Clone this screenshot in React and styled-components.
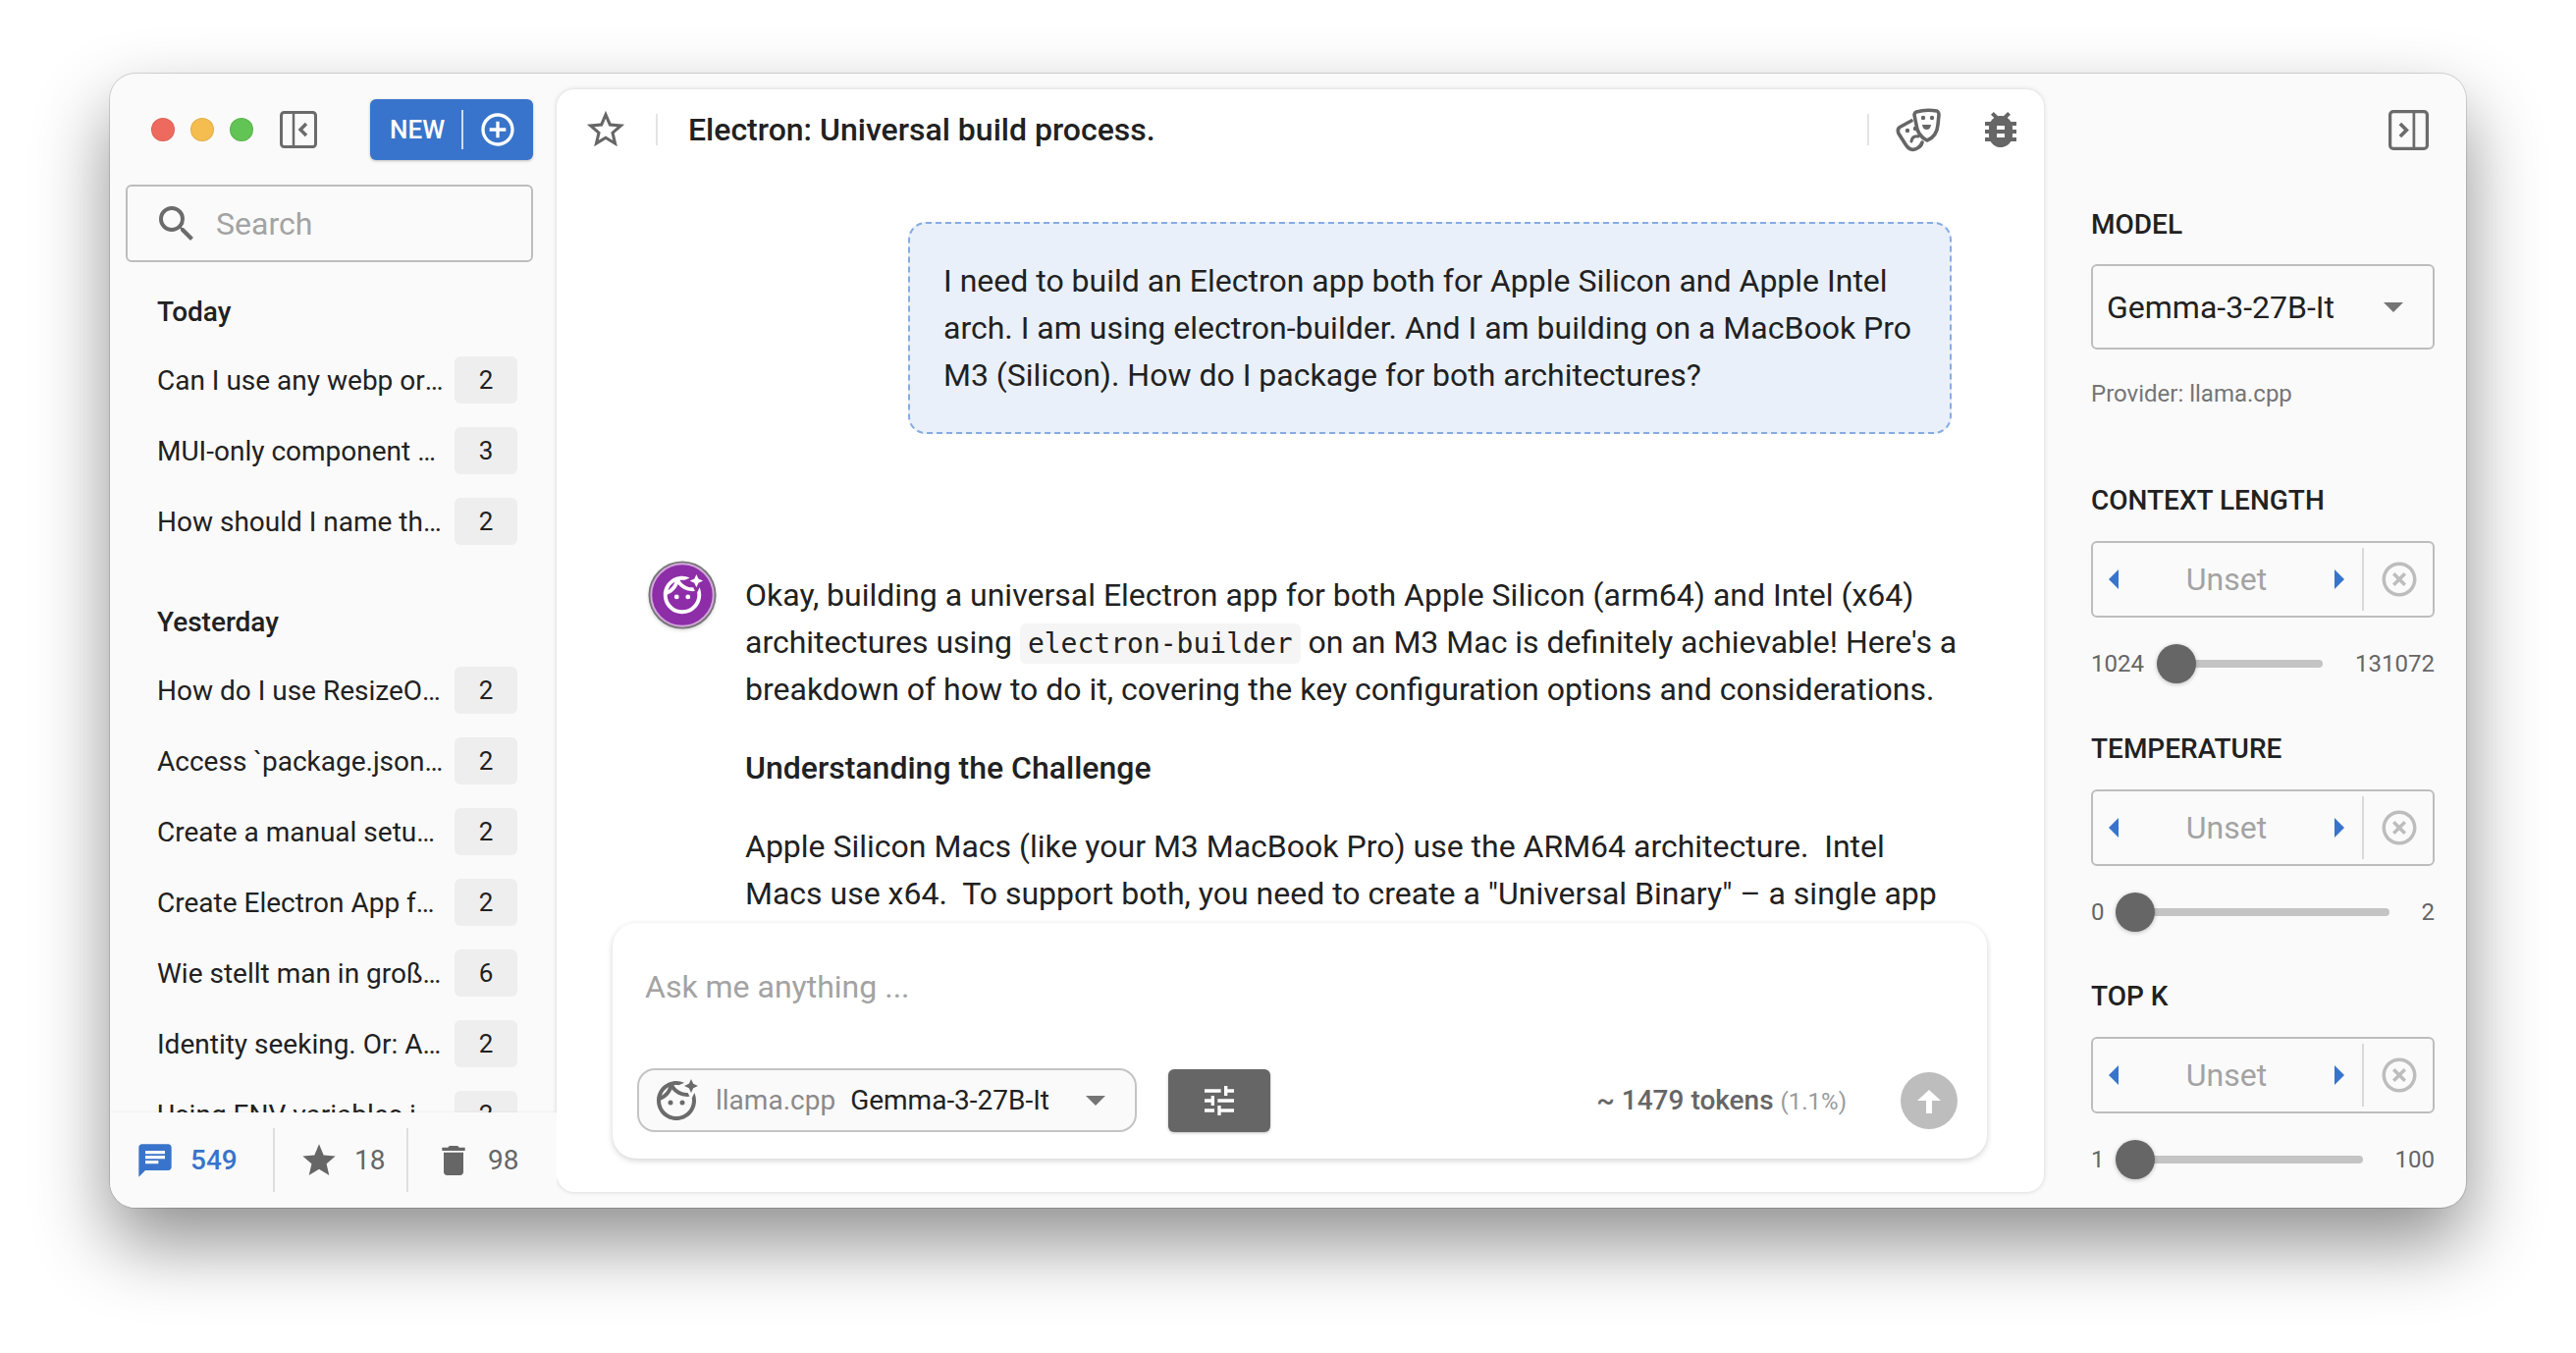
import React from 'react';
import styled, { createGlobalStyle } from 'styled-components';
import {
  MdSearch, MdStarBorder, MdStar, MdChat, MdDelete, MdAddCircleOutline, MdBugReport,
  MdTune, MdHighlightOff, MdOutlineFaceRetouchingNatural,
} from 'react-icons/md';

const GlobalStyle = createGlobalStyle`
  html, body { margin: 0; padding: 0; background: #fff; }
  * { box-sizing: border-box; }
  body { font-family: Roboto, "Liberation Sans", sans-serif; color: #212121; }
`;

const Page = styled.div`
  width: 2624px;
  height: 1378px;
  padding: 75px 112px 148px;
  overflow: hidden;
`;

const Window = styled.div`
  width: 2400px;
  height: 1155px;
  display: grid;
  grid-template-columns: 455px 1515px 430px;
  background: #fafafa;
  border-radius: 26px;
  overflow: hidden;
  box-shadow: 0 0 0 1px rgba(0, 0, 0, 0.14), 0 36px 76px rgba(0, 0, 0, 0.44);
`;

/* ---- left column ---- */

const Sidebar = styled.aside`
  display: flex;
  flex-direction: column;
  min-height: 0;
  overflow: hidden;
`;

const SideTop = styled.div`
  padding: 26px 24px 0 16px;
`;

const Toolbar = styled.div`
  display: flex;
  align-items: center;
  height: 62px;
`;

const Light = styled.span`
  width: 24px;
  height: 24px;
  border-radius: 50%;
  margin-right: 16px;
  background: ${(p) => p.$color};
  box-shadow: inset 0 0 0 1px rgba(0, 0, 0, 0.08);
  &:first-child { margin-left: 26px; }
`;

const PanelToggle = styled.svg`
  display: block;
  width: ${(p) => p.$size}px;
  height: ${(p) => p.$size}px;
  margin-left: ${(p) => p.$ml || 0}px;
`;

const NewButton = styled.button`
  margin-left: auto;
  width: 166px;
  height: 62px;
  border: 0;
  border-radius: 6px;
  background: #3874cb;
  color: #fff;
  display: flex;
  align-items: center;
  padding: 0 0 0 20px;
  font: 500 26px Roboto, sans-serif;
  box-shadow: 0 1px 3px rgba(0, 0, 0, 0.25);
`;

const NewDivider = styled.span`
  width: 2px;
  height: 40px;
  margin: 0 15px 0 17px;
  background: rgba(255, 255, 255, 0.75);
`;

const SearchBox = styled.div`
  margin-top: 25px;
  height: 79px;
  border: 2px solid #bdbdbd;
  border-radius: 6px;
  display: flex;
  align-items: center;
  padding-left: 26px;
  gap: 16px;
  color: #a3a3a3;
  font-size: 32px;
  svg { color: #6b6b6b; }
`;

const ChatList = styled.div`
  flex: 1;
  min-height: 0;
  overflow: hidden;
  padding: 16px 24px 0 16px;
`;

const GroupTitle = styled.div`
  height: 68px;
  line-height: 68px;
  padding: 1px 0 0 32px;
  font-size: 28px;
  font-weight: 500;
  &:not(:first-child) { margin-top: 32px; }
`;

const ChatRow = styled.div`
  height: 72px;
  display: flex;
  align-items: center;
  gap: 8px;
  padding: 0 16px 0 32px;
  font-size: 28px;
`;

const ChatTitle = styled.span`
  flex: 1;
  min-width: 0;
  white-space: nowrap;
  overflow: hidden;
  text-overflow: ellipsis;
`;

const CountBadge = styled.span`
  flex: none;
  width: 64px;
  height: 48px;
  line-height: 48px;
  text-align: center;
  border-radius: 6px;
  background: #eeeeee;
  font-size: 26px;
`;

const SideFooter = styled.div`
  flex: none;
  height: 97px;
  padding: 16px 0;
  display: flex;
  background: #fafafa;
  box-shadow: 0 -1px 2px rgba(0, 0, 0, 0.04);
  position: relative;
`;

const FooterItem = styled.div`
  display: flex;
  align-items: center;
  gap: ${(p) => p.$gap}px;
  width: ${(p) => p.$w}px;
  padding-left: ${(p) => p.$pl}px;
  color: ${(p) => (p.$active ? '#3874cb' : '#666')};
  font-size: 28px;
  font-weight: ${(p) => (p.$active ? 500 : 400)};
  & + & { border-left: 2px solid #dedede; }
`;

/* ---- middle column ---- */

const Main = styled.main`
  margin: 16px 0;
  min-height: 0;
  display: flex;
  flex-direction: column;
  background: #fff;
  border-radius: 18px;
  box-shadow: 0 0 5px rgba(0, 0, 0, 0.16);
  overflow: hidden;
`;

const MainHeader = styled.header`
  flex: none;
  height: 82px;
  display: flex;
  align-items: center;
  padding: 0 20px 0 27px;
  color: #666;
`;

const HeaderRule = styled.span`
  width: 2px;
  height: 32px;
  background: #e4e4e4;
  margin: ${(p) => p.$margin};
`;

const ChatHeading = styled.h1`
  margin: 0;
  flex: 1;
  font-size: 32px;
  font-weight: 500;
  color: #212121;
`;

const MasksIcon = styled.svg`
  display: block;
  width: 46px;
  height: 47px;
`;

const BugIcon = styled(MdBugReport)`
  margin-left: 37px;
`;

const Messages = styled.div`
  flex: 1;
  min-height: 0;
  overflow: hidden;
  padding-top: 53px;
`;

const UserBubble = styled.div`
  margin: 0 94px 0 358px;
  padding: 34px 34px;
  background: #e9f0f9;
  border: 2px dashed #86abe2;
  border-radius: 18px;
  font-size: 32px;
  line-height: 48px;
`;

const AssistantRow = styled.div`
  margin: 130px 0 0 93px;
  display: flex;
  gap: 31px;
`;

const Avatar = styled.div`
  flex: none;
  width: 68px;
  height: 68px;
  border-radius: 50%;
  background: #8e2da8;
  color: #fff;
  display: flex;
  align-items: center;
  justify-content: center;
  border: 2px solid #d3a8dc;
  box-shadow: 0 0 0 2px #777, 0 2px 5px rgba(0, 0, 0, 0.3);
  transform: translate(1px, 0) scale(0.96);
`;

const AssistantText = styled.div`
  width: 1240px;
  padding-top: 10px;
  font-size: 32px;
  line-height: 48px;
  p { margin: 0 0 32px; white-space: pre-wrap; }
  strong { font-weight: 500; }
`;

const InlineCode = styled.code`
  font-family: "DejaVu Sans Mono", monospace;
  font-size: 28px;
  line-height: 1;
  background: #f5f5f5;
  padding: 4px 8px;
  border-radius: 6px;
`;

const Composer = styled.div`
  flex: none;
  margin: 0 58px 34px 57px;
  padding: 41px 30px 27px 25px;
  background: #fff;
  border-radius: 24px;
  box-shadow: 0 2px 6px rgba(0, 0, 0, 0.18);
`;

const Placeholder = styled.div`
  height: 48px;
  line-height: 48px;
  margin: 0 0 59px 8px;
  font-size: 32px;
  color: #a3a3a3;
`;

const ComposerBar = styled.div`
  display: flex;
  align-items: center;
  height: 65px;
`;

const ModelPill = styled.div`
  width: 509px;
  height: 65px;
  border: 2px solid #c4c4c4;
  border-radius: 18px;
  background: #fafafa;
  display: flex;
  align-items: center;
  padding-left: 14px;
  font-size: 28px;
  svg { color: #6b6b6b; }
`;

const ProviderName = styled.span`
  color: #8a8a8a;
  margin: 0 15px 0 16px;
`;

const Triangle = styled.span`
  display: block;
  flex: none;
  width: 0;
  height: 0;
  border-style: solid;
  border-color: transparent;
  ${(p) => p.$dir === 'down' && `border-width: 10px 10px 0; border-top-color: #757575; margin-left: ${p.$ml}px;`}
  ${(p) => p.$dir === 'left' && 'border-width: 10px 10px 10px 0; border-right-color: #3874cb;'}
  ${(p) => p.$dir === 'right' && 'border-width: 10px 0 10px 10px; border-left-color: #3874cb;'}
`;

const TuneButton = styled.button`
  margin-left: 32px;
  width: 104px;
  height: 64px;
  border: 0;
  border-radius: 6px;
  background: #666;
  color: #fff;
  display: flex;
  align-items: center;
  justify-content: center;
  box-shadow: 0 1px 3px rgba(0, 0, 0, 0.25);
`;

const TokenCount = styled.div`
  margin-left: auto;
  color: #666;
  font-size: 28px;
  font-weight: 500;
  span { color: #9a9a9a; font-size: 24px; font-weight: 400; }
`;

const SendButton = styled.button`
  margin-left: 55px;
  width: 58px;
  height: 58px;
  border: 0;
  border-radius: 50%;
  background: #bdbdbd;
  display: block;
  padding: 0;
  svg { display: block; }
`;

/* ---- right column ---- */

const Settings = styled.aside`
  min-height: 0;
  overflow: hidden;
  padding: 37px 32px 0 48px;
`;

const SettingsTop = styled.div`
  display: flex;
  justify-content: flex-end;
  padding-right: 6px;
  margin-bottom: 58px;
`;

const FieldLabel = styled.div`
  height: 36px;
  line-height: 36px;
  font-size: 28px;
  font-weight: 500;
`;

const ModelSelect = styled.div`
  margin-top: 22px;
  height: 87px;
  border: 2px solid #bdbdbd;
  border-radius: 6px;
  display: flex;
  align-items: center;
  padding-left: 14px;
  font-size: 32px;
`;

const ProviderNote = styled.div`
  margin: 27px 0 73px;
  height: 36px;
  line-height: 36px;
  font-size: 24px;
  color: #757575;
`;

const Spinner = styled.div`
  margin-top: 23px;
  height: 78px;
  border: 2px solid #bdbdbd;
  border-radius: 6px;
  display: grid;
  grid-template-columns: 274px 1fr;
  align-items: center;
  font-size: 32px;
`;

const SpinnerValue = styled.div`
  display: flex;
  align-items: center;
  justify-content: space-between;
  padding: 0 18px 0 16px;
  color: #a3a3a3;
`;

const ClearCell = styled.div`
  height: 64px;
  display: flex;
  align-items: center;
  justify-content: center;
  padding-left: 2px;
  border-left: 2px solid #d9d9d9;
  color: #bdbdbd;
`;

const SliderRow = styled.div`
  margin: 27px 0 48.5px;
  height: 40px;
  display: flex;
  align-items: center;
  font-size: 24px;
  color: #666;
`;

const SliderTrack = styled.div`
  flex: 1;
  height: 8px;
  margin: 0 33px 0 ${(p) => p.$gap}px;
  border-radius: 4px;
  background: #c4c4c4;
  position: relative;
`;

const SliderThumb = styled.span`
  position: absolute;
  left: 0;
  top: -16px;
  width: 40px;
  height: 40px;
  border-radius: 50%;
  background: #666;
  box-shadow: 0 1px 4px rgba(0, 0, 0, 0.25);
`;

const todayChats = [
  ['Can I use any webp or png image here please', 2],
  ['MUI-only component Wrapper library question', 3],
  ['How should I name the new package', 2],
];

const yesterdayChats = [
  ['How do I use ResizeObserver in React', 2],
  ['Access `package.json` version at runtime', 2],
  ['Create a manual setup for Vite and React', 2],
  ['Create Electron App for both architectures', 2],
  ['Wie stellt man in großen Projekten um', 6],
  ['Identity seeking. Or: Always a short story', 2],
  ['Using ENV variables in a Vite project', 2],
];

const sliders = [
  { label: 'CONTEXT LENGTH', min: '1024', max: '131072', gap: 13 },
  { label: 'TEMPERATURE', min: '0', max: '2', gap: 11 },
  { label: 'TOP K', min: '1', max: '100', gap: 11 },
];

const Chat = ({ title, count }) => (
  <ChatRow>
    <ChatTitle>{title}</ChatTitle>
    <CountBadge>{count}</CountBadge>
  </ChatRow>
);

const SliderField = ({ label, min, max, gap }) => (
  <div>
    <FieldLabel>{label}</FieldLabel>
    <Spinner>
      <SpinnerValue>
        <Triangle $dir="left" />
        Unset
        <Triangle $dir="right" />
      </SpinnerValue>
      <ClearCell>
        <MdHighlightOff size={42} />
      </ClearCell>
    </Spinner>
    <SliderRow>
      {min}
      <SliderTrack $gap={gap}>
        <SliderThumb />
      </SliderTrack>
      {max}
    </SliderRow>
  </div>
);

export default function App() {
  return (
    <Page>
      <GlobalStyle />
      <Window>
        <Sidebar>
          <SideTop>
            <Toolbar>
              <Light $color="#ee6a5f" />
              <Light $color="#f5bd4f" />
              <Light $color="#61c454" />
              <PanelToggle $size={38} $ml={11} viewBox="0 0 38 38" fill="none" stroke="#6b6b6b" strokeWidth="3">
                <rect x="1.5" y="1.5" width="35" height="35" rx="3" />
                <path d="M14 1.5v35" strokeWidth="2.5" />
                <path d="M27 13l-6 6 6 6" strokeWidth="3.4" />
              </PanelToggle>
              <NewButton>
                NEW
                <NewDivider />
                <MdAddCircleOutline size={40} />
              </NewButton>
            </Toolbar>
            <SearchBox>
              <MdSearch size={48} />
              Search
            </SearchBox>
          </SideTop>
          <ChatList>
            <GroupTitle>Today</GroupTitle>
            {todayChats.map(([title, count]) => (
              <Chat key={title} title={title} count={count} />
            ))}
            <GroupTitle>Yesterday</GroupTitle>
            {yesterdayChats.map(([title, count]) => (
              <Chat key={title} title={title} count={count} />
            ))}
          </ChatList>
          <SideFooter>
            <FooterItem $active $w={166} $pl={26} $gap={16}>
              <MdChat size={40} />
              549
            </FooterItem>
            <FooterItem $w={136} $pl={25} $gap={16}>
              <MdStar size={40} />
              18
            </FooterItem>
            <FooterItem $w={150} $pl={26} $gap={15}>
              <MdDelete size={40} />
              98
            </FooterItem>
          </SideFooter>
        </Sidebar>

        <Main>
          <MainHeader>
            <MdStarBorder size={46} />
            <HeaderRule $margin="0 31px 0 28px" />
            <ChatHeading>Electron: Universal build process.</ChatHeading>
            <HeaderRule $margin="0 27px 0 0" />
            <MasksIcon viewBox="10 9 46 47" fill="none" stroke="#666" strokeWidth="3.6" strokeLinejoin="round" strokeLinecap="round">
              <path d="M31 14Q41 11 52 13Q54 14 54 17L53 27Q52 39 42 43Q32 38 31 27L29 17Q29 15 31 14Z" />
              <path d="M26 23L15 29Q11 31 13 36L20 47Q25 55 32 51Q36 49 37 45" />
              <path d="M26 44Q27 38 33 39" strokeWidth="3" />
              <g fill="#666" stroke="none">
                <circle cx="38" cy="20" r="2.2" />
                <circle cx="47" cy="20" r="2.2" />
                <circle cx="22" cy="33" r="2.2" />
                <circle cx="30" cy="31" r="2.2" />
                <path d="M37 27h9q-.5 5-4.5 5t-4.500-5z" />
              </g>
            </MasksIcon>
            <BugIcon size={48} />
          </MainHeader>
          <Messages>
            <UserBubble>
              I need to build an Electron app both for Apple Silicon and Apple Intel arch. I am using electron-builder. And I am building on a MacBook Pro M3 (Silicon). How do I package for both architectures?
            </UserBubble>
            <AssistantRow>
              <Avatar>
                <MdOutlineFaceRetouchingNatural size={48} />
              </Avatar>
              <AssistantText>
                <p>
                  Okay, building a universal Electron app for both Apple Silicon (arm64) and Intel (x64) architectures using <InlineCode>electron-builder</InlineCode> on an M3 Mac is definitely achievable! Here's a breakdown of how to do it, covering the key configuration options and considerations.
                </p>
                <p><strong>Understanding the Challenge</strong></p>
                <p>{'Apple Silicon Macs (like your M3 MacBook Pro) use the ARM64 architecture.  Intel Macs use x64.  To support both, you need to create a "Universal Binary" – a single app'}</p>
              </AssistantText>
            </AssistantRow>
          </Messages>
          <Composer>
            <Placeholder>Ask me anything ...</Placeholder>
            <ComposerBar>
              <ModelPill>
                <MdOutlineFaceRetouchingNatural size={48} />
                <ProviderName>llama.cpp</ProviderName>
                Gemma-3-27B-It
                <Triangle $dir="down" $ml={37} />
              </ModelPill>
              <TuneButton>
                <MdTune size={40} />
              </TuneButton>
              <TokenCount>
                ~ 1479 tokens <span>(1.1%)</span>
              </TokenCount>
              <SendButton>
                <svg width="58" height="58" viewBox="6 6 58 58" fill="#fff">
                  <polygon points="35,24 47,35 38,35 38,48 32,48 32,35 23,35" />
                </svg>
              </SendButton>
            </ComposerBar>
          </Composer>
        </Main>

        <Settings>
          <SettingsTop>
            <PanelToggle $size={41} viewBox="0 0 38 38" fill="none" stroke="#6b6b6b" strokeWidth="3">
              <rect x="1.5" y="1.5" width="35" height="35" rx="3" />
              <path d="M24 1.5v35" strokeWidth="2.5" />
              <path d="M11 13l6 6-6 6" strokeWidth="3.4" />
            </PanelToggle>
          </SettingsTop>
          <FieldLabel>MODEL</FieldLabel>
          <ModelSelect>
            Gemma-3-27B-It
            <Triangle $dir="down" $ml={50} />
          </ModelSelect>
          <ProviderNote>Provider: llama.cpp</ProviderNote>
          {sliders.map((s) => (
            <SliderField key={s.label} {...s} />
          ))}
        </Settings>
      </Window>
    </Page>
  );
}
